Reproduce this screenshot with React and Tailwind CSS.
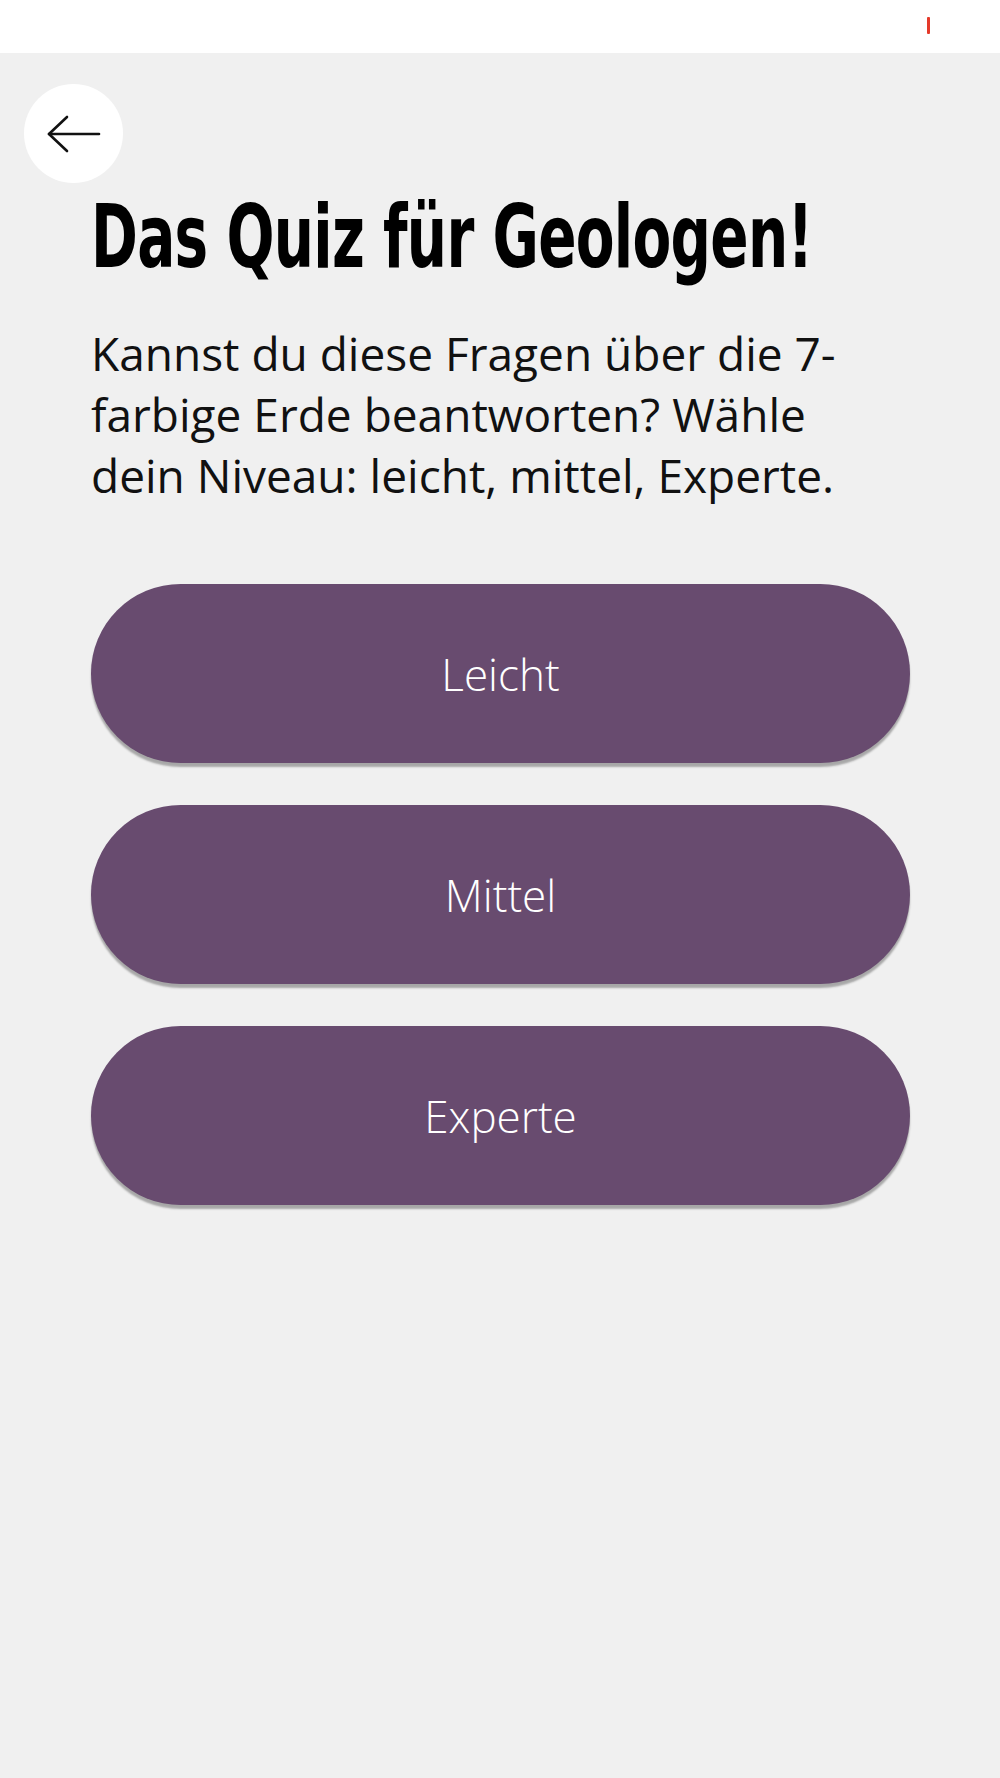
export default function App() {
  const levels = ["Leicht", "Mittel", "Experte"];
  return (
    <div className="w-[1000px] min-h-[1778px] bg-[#f0f0f0] flex flex-col">
      <div className="h-[53px] bg-white flex justify-end items-start pt-[17px] pr-[70px]">
        <div className="w-[3px] h-[17px] rounded-[1px] bg-[#e53a2a]" />
      </div>
      <div className="flex flex-col">
        <button className="mt-[31px] ml-[24px] w-[99px] h-[99px] rounded-full bg-white flex items-center justify-center">
          <svg width="54" height="38" viewBox="0 0 54 38" fill="none" stroke="#111" strokeWidth="2.6" strokeLinecap="round" strokeLinejoin="round">
            <path d="M2 19 H52" />
            <path d="M20 2 L2 19 L20 36" />
          </svg>
        </button>
        <div className="pl-[91px] pr-[90px] flex flex-col">
          <h1 className="mt-[14px] h-[80px] leading-[80px] text-[87px] font-bold text-black whitespace-nowrap origin-left scale-x-[0.722] [font-family:'DejaVu_Sans_Condensed','DejaVu_Sans',sans-serif] tracking-[-1px]">
            Das Quiz für Geologen!
          </h1>
          <p className="mt-[46px] text-[46px] leading-[61px] font-normal text-[#111] [font-family:'Open_Sans','Noto_Sans',sans-serif]">
            Kannst du diese Fragen über die 7-
            <br />
            farbige Erde beantworten? Wähle
            <br />
            dein Niveau: leicht, mittel, Experte.
          </p>
          <div className="mt-[78px] flex flex-col gap-[42px]">
            {levels.map((l) => (
              <button
                key={l}
                className="h-[179px] w-full rounded-full bg-[#684b6f] text-white text-[44px] font-light shadow-[0_4px_2px_rgba(0,0,0,0.3)] [font-family:'Open_Sans','Noto_Sans',sans-serif]"
              >
                {l}
              </button>
            ))}
          </div>
        </div>
      </div>
    </div>
  );
}
